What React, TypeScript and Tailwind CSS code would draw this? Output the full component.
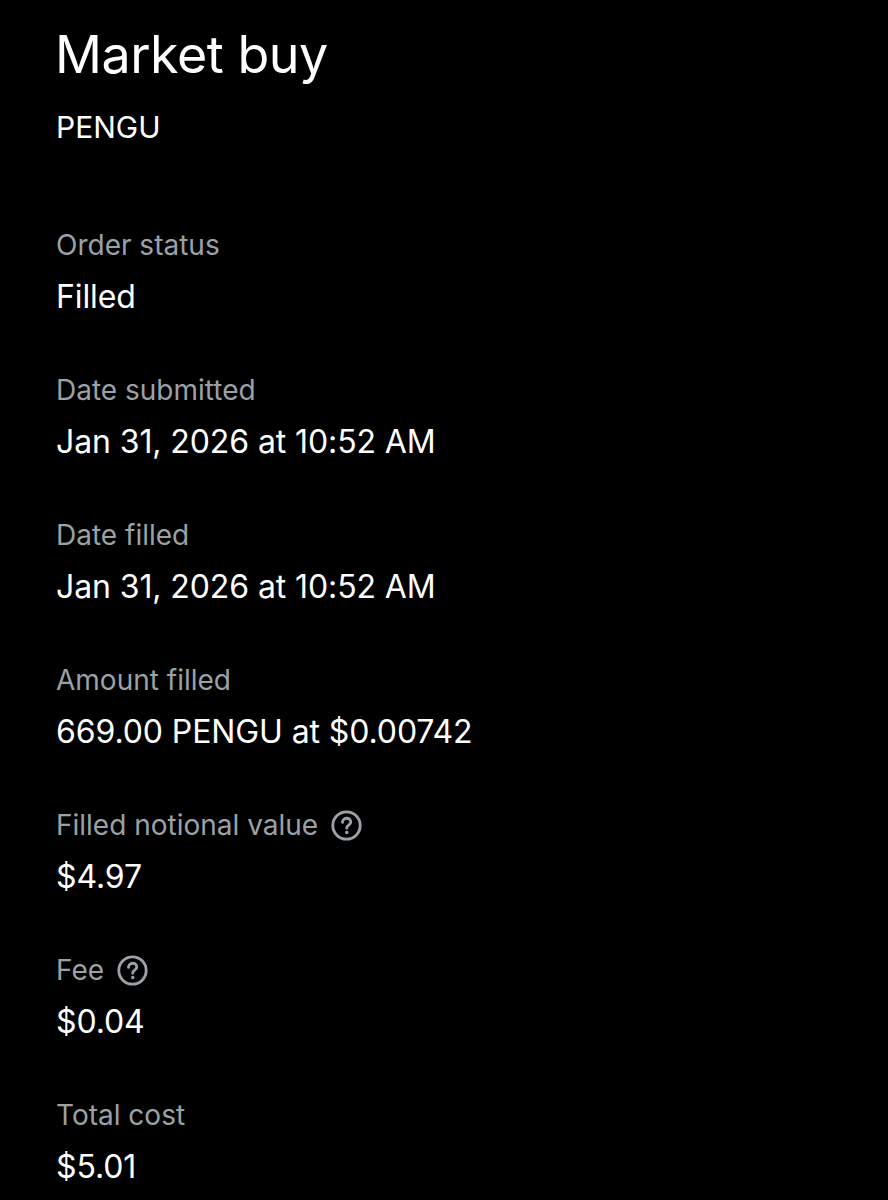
const rows: { label: string; value: string; help?: boolean }[] = [
  { label: 'Order status', value: 'Filled' },
  { label: 'Date submitted', value: 'Jan 31, 2026 at 10:52 AM' },
  { label: 'Date filled', value: 'Jan 31, 2026 at 10:52 AM' },
  { label: 'Amount filled', value: '669.00 PENGU at $0.00742' },
  { label: 'Filled notional value', value: '$4.97', help: true },
  { label: 'Fee', value: '$0.04', help: true },
  { label: 'Total cost', value: '$5.01' },
];

function HelpIcon() {
  return (
    <svg width="31" height="31" viewBox="0 0 24 24" fill="none" className="ml-[13px] shrink-0">
      <circle cx="12" cy="12" r="10.6" stroke="#9ba1a6" strokeWidth="2.2" />
      <path
        d="M8.9 9.6c0-1.9 1.4-3.2 3.2-3.2 1.9 0 3.2 1.2 3.2 2.8 0 1.3-.8 2-1.7 2.6-.8.5-1.4.9-1.4 1.9v.5"
        stroke="#9ba1a6"
        strokeWidth="2.2"
        strokeLinecap="round"
      />
      <circle cx="12.2" cy="17.4" r="1.35" fill="#9ba1a6" />
    </svg>
  );
}

export default function App() {
  return (
    <div
      className="min-h-[1200px] w-full bg-black pl-[56px] pt-[25px] text-white"
      style={{ fontFamily: 'Inter, "Noto Sans", sans-serif' }}
    >
      <h1 className="-ml-px text-[52px] leading-[60px] font-normal tracking-[-0.5px]">Market buy</h1>
      <p className="mt-[22px] text-[30px] leading-[40px]">PENGU</p>

      <div className="mt-[80px] flex flex-col gap-[55px]">
        {rows.map((row) => (
          <div key={row.label} className="flex flex-col gap-[14px]">
            <div className="flex items-center text-[28px] leading-[36px] text-[#9ba1a6]">
              <span>{row.label}</span>
              {row.help && <HelpIcon />}
            </div>
            <div className="text-[32px] leading-[40px] tracking-[-0.1px]">{row.value}</div>
          </div>
        ))}
      </div>
    </div>
  );
}
